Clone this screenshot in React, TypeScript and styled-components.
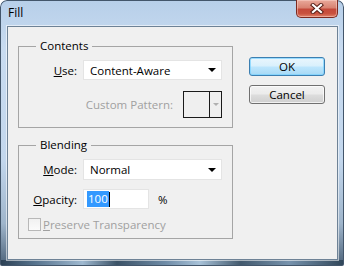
import React from "react";
import styled, { createGlobalStyle } from "styled-components";

const Global = createGlobalStyle`
  html, body { margin: 0; padding: 0; background: #ffffff; }
  body { width: 344px; height: 266px; overflow: hidden; font-family: "Open Sans", "Noto Sans", sans-serif; }
  * { box-sizing: border-box; }
`;

const Window = styled.div`
  width: 344px;
  height: 266px;
  display: flex;
  flex-direction: column;
  border-radius: 7px 7px 2px 2px;
  overflow: hidden;
  background:
    linear-gradient(90deg, #2a3f52 0%, #56728c 10%, #9fb9d0 24%, #3b5266 34%, #6e8ba6 48%, #a8c2d8 58%, #42596d 70%, #7793ad 84%, #2f4558 100%) bottom / 100% 6px no-repeat,
    linear-gradient(180deg, #b7cfe9 0%, #c8dbf0 18%, #c3d7ed 60%, #9fb5cb 84%, #4c6279 100%);
  box-shadow: inset 0 0 0 1px #43566b;
  font-size: 11.5px;
  color: #000;
`;

const TitleBar = styled.div`
  height: 26px;
  display: flex;
  align-items: flex-start;
  flex-shrink: 0;
`;

const Title = styled.div`
  margin: 5px 0 0 8px;
  font-size: 12px;
  line-height: 16px;
  color: #000;
`;

const CloseButton = styled.div`
  margin-left: auto;
  margin-right: 6px;
  width: 42px;
  height: 18px;
  border: 1px solid #7d2a20;
  border-top: none;
  border-radius: 0 0 5px 5px;
  background: linear-gradient(180deg, #e9a99b 0%, #d98372 45%, #c4493a 55%, #c9523f 80%, #e0836b 100%);
  box-shadow: inset 0 0 0 1px rgba(255, 220, 210, 0.45);
  display: flex;
  align-items: center;
  justify-content: center;
`;

const Client = styled.div`
  flex: 1;
  margin: 0 6px 6px 7px;
  border: 1px solid #6e8296;
  box-shadow: 0 0 0 1px rgba(255, 255, 255, 0.55);
  background: #f0f0f0;
  display: flex;
  padding: 12px 0 0 10px;
`;

const LeftColumn = styled.div`
  display: flex;
  flex-direction: column;
  gap: 10px;
`;

const Group = styled.fieldset`
  width: 215px;
  margin: 0;
  padding: 0 10px ${(p: { $bottom: number }) => p.$bottom}px 0;
  border: 1px solid #a5a5a5;
  min-width: 0;
`;

const Legend = styled.legend`
  margin-left: 17px;
  padding: 0 4px;
  line-height: 14px;
  font-size: 11.5px;
  color: #000;
`;

const Row = styled.div<{ $top: number; $h: number; $end?: boolean }>`
  display: flex;
  align-items: center;
  height: ${(p) => p.$h}px;
  margin-top: ${(p) => p.$top}px;
  justify-content: ${(p) => (p.$end ? "flex-end" : "flex-start")};
`;

const Label = styled.div<{ $disabled?: boolean }>`
  width: 58px;
  text-align: right;
  margin-right: 6px;
  white-space: nowrap;
  color: ${(p) => (p.$disabled ? "#a0a0a0" : "#000")};
`;

const FreeLabel = styled.div<{ $disabled?: boolean }>`
  white-space: nowrap;
  color: ${(p) => (p.$disabled ? "#a0a0a0" : "#000")};
`;

const Select = styled.div`
  width: 139px;
  height: 100%;
  background: #fff;
  border: 1px solid #e4e4e4;
  display: flex;
  align-items: center;
  padding-left: 6px;
  padding-right: 5px;
`;

const SelectText = styled.span`
  flex: 1;
`;

const Arrow = styled.span<{ $color: string }>`
  width: 0;
  height: 0;
  border-left: 4px solid transparent;
  border-right: 4px solid transparent;
  border-top: 4px solid ${(p) => p.$color};
`;

const Pattern = styled.div`
  margin-left: 10px;
  width: 39px;
  height: 27px;
  border: 1px solid #1a1a1a;
  display: flex;
  background: #efefef;
`;

const PatternSwatch = styled.div`
  width: 26px;
  border-right: 1px solid #1a1a1a;
`;

const PatternArrow = styled.div`
  flex: 1;
  display: flex;
  align-items: center;
  justify-content: center;
`;

const Input = styled.div`
  width: 66px;
  height: 100%;
  background: #fff;
  border: 1px solid #e4e4e4;
  display: flex;
  align-items: center;
  padding-left: 3px;
`;

const Selected = styled.span`
  background: #3399ff;
  color: #fff;
  line-height: 16px;
  padding: 0 1px;
`;

const Caret = styled.span`
  width: 1px;
  height: 15px;
  background: #000;
`;

const Percent = styled.span`
  margin-left: 9px;
`;

const CheckBox = styled.div`
  margin-left: 9px;
  margin-right: 2px;
  width: 13px;
  height: 13px;
  border: 1px solid #b8b8b8;
  background: linear-gradient(180deg, #f1f1f1, #fbfbfb);
`;

const RightColumn = styled.div`
  margin-left: 16px;
  padding-top: 18px;
  display: flex;
  flex-direction: column;
  gap: 9px;
`;

const Button = styled.div<{ $default?: boolean }>`
  width: 76px;
  height: 19px;
  border-radius: 3px;
  border: 1px solid ${(p) => (p.$default ? "#3c7fb1" : "#707070")};
  background: ${(p) =>
    p.$default
      ? "linear-gradient(180deg, #eaf6fd 0%, #d9f0fc 48%, #bee6fd 52%, #a7d9f5 100%)"
      : "linear-gradient(180deg, #f2f2f2 0%, #ebebeb 48%, #dddddd 52%, #cfcfcf 100%)"};
  box-shadow: inset 0 0 0 1px ${(p) => (p.$default ? "rgba(120,210,255,0.7)" : "rgba(255,255,255,0.7)")};
  display: flex;
  align-items: center;
  justify-content: center;
  line-height: 15px;
`;

export default function App() {
  return (
    <>
      <Global />
      <Window>
        <TitleBar>
          <Title>Fill</Title>
          <CloseButton>
            <svg width="14" height="11" viewBox="0 0 14 11">
              <path d="M3 2 L11 9 M11 2 L3 9" stroke="#5a2018" strokeWidth="4.2" strokeLinecap="square" />
              <path d="M3 2 L11 9 M11 2 L3 9" stroke="#ffffff" strokeWidth="2.2" strokeLinecap="square" />
            </svg>
          </CloseButton>
        </TitleBar>
        <Client>
          <LeftColumn>
            <Group $bottom={9}>
              <Legend>Contents</Legend>
              <Row $top={7} $h={20}>
                <Label>
                  <u>U</u>se:
                </Label>
                <Select>
                  <SelectText>Content-Aware</SelectText>
                  <Arrow $color="#000" />
                </Select>
              </Row>
              <Row $top={11} $h={27} $end>
                <FreeLabel $disabled>Custom Pattern:</FreeLabel>
                <Pattern>
                  <PatternSwatch />
                  <PatternArrow>
                    <Arrow $color="#b0b0b0" style={{ borderWidth: "3px 3px 0 3px" }} />
                  </PatternArrow>
                </Pattern>
              </Row>
            </Group>
            <Group $bottom={7}>
              <Legend>Blending</Legend>
              <Row $top={7} $h={21}>
                <Label>
                  <u>M</u>ode:
                </Label>
                <Select>
                  <SelectText>Normal</SelectText>
                  <Arrow $color="#000" />
                </Select>
              </Row>
              <Row $top={9} $h={20}>
                <Label>
                  <u>O</u>pacity:
                </Label>
                <Input>
                  <Selected>100</Selected>
                  <Caret />
                </Input>
                <Percent>%</Percent>
              </Row>
              <Row $top={9} $h={13}>
                <CheckBox />
                <FreeLabel $disabled>
                  <u>P</u>reserve Transparency
                </FreeLabel>
              </Row>
            </Group>
          </LeftColumn>
          <RightColumn>
            <Button $default>OK</Button>
            <Button>Cancel</Button>
          </RightColumn>
        </Client>
      </Window>
    </>
  );
}
